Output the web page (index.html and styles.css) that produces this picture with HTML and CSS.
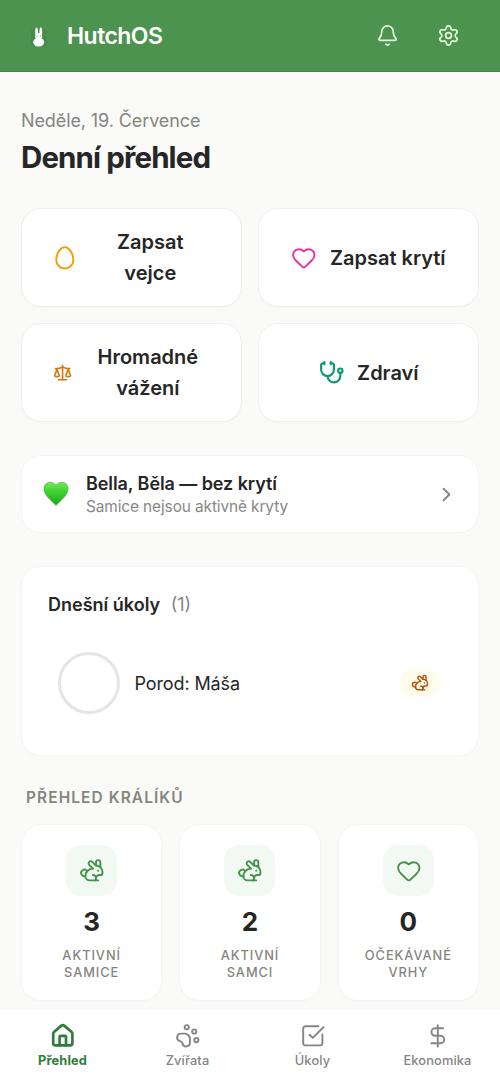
FILE: index.html
```html
<!DOCTYPE html>
<html lang="cs">
<head>
<meta charset="utf-8">
<title>HutchOS</title>
<link rel="stylesheet" href="styles.css">
</head>
<body>
<svg class="defs" aria-hidden="true">
  <symbol id="rabbit" viewBox="0 0 24 24">
    <path d="M13 16a3 3 0 0 1 2.24 5"/><path d="M18 12h.01"/>
    <path d="M18 21h-8a4 4 0 0 1-4-4 7 7 0 0 1 7-7h.2L9.6 6.4a1 1 0 1 1 2.8-2.8L15.8 7h.2c3.3 0 6 2.7 6 6v1a2 2 0 0 1-2 2h-1a3 3 0 0 0-3 3"/>
    <path d="M20 8.54V4a2 2 0 1 0-4 0v3"/><path d="M7.612 12.524a3 3 0 1 0-1.6 4.3"/>
  </symbol>
  <symbol id="heart" viewBox="0 0 24 24">
    <path d="M2 9.5a5.5 5.5 0 0 1 9.591-3.676.56.56 0 0 0 .818 0A5.49 5.49 0 0 1 22 9.5c0 2.29-1.5 4-3 5.5l-5.492 5.313a2 2 0 0 1-3 .019L5 15c-1.5-1.5-3-3.2-3-5.5"/>
  </symbol>
</svg>
<div class="app">
  <header class="topbar">
    <svg class="logo" viewBox="0 0 36 36">
      <rect class="logo-bg" x="11" y="11" width="16" height="17" rx="2"/>
      <ellipse cx="16.600" cy="14" rx="1.400" ry="4.600"/><ellipse cx="20.800" cy="14" rx="1.400" ry="4.600"/>
      <ellipse cx="18.700" cy="18.500" rx="3.500" ry="3.500"/><ellipse cx="18.700" cy="24.300" rx="5.500" ry="4.200"/>
      <circle class="logo-eye" cx="17.200" cy="18" r=".6"/><circle class="logo-eye" cx="20.200" cy="18" r=".6"/>
    </svg>
    <span class="brand">HutchOS</span>
    <div class="actions">
      <svg class="icon i23" viewBox="0 0 24 24"><path d="M10.268 21a2 2 0 0 0 3.464 0"/><path d="M3.262 15.326A1 1 0 0 0 4 17h16a1 1 0 0 0 .74-1.673C19.41 13.956 18 12.499 18 8A6 6 0 0 0 6 8c0 4.499-1.411 5.956-2.738 7.326"/></svg>
      <svg class="icon i23" viewBox="0 0 24 24"><path d="M9.671 4.136a2.34 2.34 0 0 1 4.659 0 2.34 2.34 0 0 0 3.319 1.915 2.34 2.34 0 0 1 2.33 4.033 2.34 2.34 0 0 0 0 3.831 2.34 2.34 0 0 1-2.33 4.033 2.34 2.34 0 0 0-3.319 1.915 2.34 2.34 0 0 1-4.659 0 2.34 2.34 0 0 0-3.32-1.915 2.34 2.34 0 0 1-2.33-4.033 2.34 2.34 0 0 0 0-3.831A2.34 2.34 0 0 1 6.35 6.051a2.34 2.34 0 0 0 3.319-1.915"/><circle cx="12" cy="12" r="3"/></svg>
    </div>
  </header>
  <main class="content">
    <p class="date">Neděle, 19. Července</p>
    <h1 class="title">Denní přehled</h1>
    <div class="quick">
      <button class="card quick-btn egg"><svg class="icon i26" viewBox="0 0 24 24"><path d="M12 2C8 2 4 8 4 14a8 8 0 0 0 16 0c0-6-4-12-8-12"/></svg><span class="quick-label">Zapsat<br>vejce</span></button>
      <button class="card quick-btn mate"><svg class="icon i26"><use href="#heart"/></svg><span class="quick-text">Zapsat krytí</span></button>
      <button class="card quick-btn weigh"><svg class="icon i19" viewBox="0 0 24 24"><path d="m16 16 3-8 3 8c-.87.65-1.92 1-3 1s-2.13-.35-3-1Z"/><path d="m2 16 3-8 3 8c-.87.65-1.92 1-3 1s-2.13-.35-3-1Z"/><path d="M7 21h10M12 3v18"/><path d="M3 7h2c2 0 5-1 7-2 2 1 5 2 7 2h2"/></svg><span class="quick-label">Hromadné<br>vážení</span></button>
      <button class="card quick-btn health"><svg class="icon i26" viewBox="0 0 24 24"><path d="M11 2v2M5 2v2"/><path d="M5 3H4a2 2 0 0 0-2 2v4a6 6 0 0 0 12 0V5a2 2 0 0 0-2-2h-1"/><path d="M8 15a6 6 0 0 0 12 0v-3"/><circle cx="20" cy="10" r="2"/></svg><span class="quick-text">Zdraví</span></button>
    </div>
    <section class="card notice">
      <svg class="green-heart" viewBox="0 0 26 26">
        <defs><linearGradient id="hg" x1="0" y1="0" x2="0" y2="1"><stop offset="0" stop-color="#7be65f"/><stop offset=".35" stop-color="#45d630"/><stop offset="1" stop-color="#16a61c"/></linearGradient></defs>
        <path fill="url(#hg)" stroke="#2fae2b" stroke-width=".6" d="M13 4.500C11.500 2.200 9.300 1.200 7 1.200 3.500 1.200 1 4 1 7.800c0 6.500 6.500 10.700 12 16.700C18.500 18.500 25 14.300 25 7.800c0-3.800-2.500-6.600-6-6.600C16.700 1.200 14.500 2.200 13 4.500Z"/>
      </svg>
      <div class="notice-text"><strong>Bella, Běla — bez krytí</strong><span>Samice nejsou aktivně kryty</span></div>
      <svg class="icon i23 chevron" viewBox="0 0 24 24"><path d="m9 18 6-6-6-6"/></svg>
    </section>
    <section class="card tasks">
      <h2 class="tasks-title">Dnešní úkoly <span>(1)</span></h2>
      <div class="task"><span class="check"></span><span class="task-name">Porod: Máša</span><span class="tag"><svg class="icon"><use href="#rabbit"/></svg></span></div>
    </section>
    <h2 class="section-title">PŘEHLED KRÁLÍKŮ</h2>
    <div class="stats">
      <div class="card stat"><span class="stat-icon"><svg class="icon i26"><use href="#rabbit"/></svg></span><b>3</b><small>AKTIVNÍ<br>SAMICE</small></div>
      <div class="card stat"><span class="stat-icon"><svg class="icon i26"><use href="#rabbit"/></svg></span><b>2</b><small>AKTIVNÍ<br>SAMCI</small></div>
      <div class="card stat"><span class="stat-icon"><svg class="icon i26"><use href="#heart"/></svg></span><b>0</b><small>OČEKÁVANÉ<br>VRHY</small></div>
    </div>
  </main>
  <nav class="tabs">
    <a class="tab active"><svg class="icon i26" viewBox="0 0 24 24"><path d="M15 21v-8a1 1 0 0 0-1-1h-4a1 1 0 0 0-1 1v8"/><path d="M3 10a2 2 0 0 1 .709-1.528l7-6a2 2 0 0 1 2.582 0l7 6A2 2 0 0 1 21 10v9a2 2 0 0 1-2 2H5a2 2 0 0 1-2-2z"/></svg><span>Přehled</span></a>
    <a class="tab"><svg class="icon i26" viewBox="0 0 24 24"><circle cx="11" cy="4" r="2"/><circle cx="18" cy="8" r="2"/><circle cx="20" cy="16" r="2"/><path d="M9 10a5 5 0 0 1 5 5v3.500a3.500 3.500 0 0 1-6.840 1.045Q6.520 17.480 4.460 16.840A3.500 3.500 0 0 1 5.500 10Z"/></svg><span>Zvířata</span></a>
    <a class="tab"><svg class="icon i26" viewBox="0 0 24 24"><path d="M21 10.656V19a2 2 0 0 1-2 2H5a2 2 0 0 1-2-2V5a2 2 0 0 1 2-2h12.344"/><path d="m9 11 3 3L22 4"/></svg><span>Úkoly</span></a>
    <a class="tab"><svg class="icon i26" viewBox="0 0 24 24"><path d="M12 2v20"/><path d="M17 5H9.500a3.500 3.500 0 0 0 0 7h5a3.500 3.500 0 0 1 0 7H6"/></svg><span>Ekonomika</span></a>
  </nav>
</div>
</body>
</html>
```
FILE: styles.css
```css
* { box-sizing: border-box; }
body { margin: 0; background: #fafaf8; color: #262626; font-family: Inter, sans-serif; }
h1, h2, p { margin: 0; }
.defs { display: none; }
.app { height: 1082px; display: flex; flex-direction: column; overflow: hidden; }
.icon { flex: none; fill: none; stroke: currentColor; stroke-width: 1.8; stroke-linecap: round; stroke-linejoin: round; }
.i19 { width: 19.2px; height: 19.2px; }
.i23 { width: 23px; height: 23px; }
.i26 { width: 25.6px; height: 25.6px; }

.topbar { flex: none; height: 72px; display: flex; align-items: center; padding: 0 40px 0 20px; background: #4c934f; border-bottom: 1px solid #438747; color: #fff; }
.logo { width: 36px; height: 36px; fill: #fff; }
.logo-bg, .logo-eye { fill: #468b4b; }
.brand { margin-left: 11px; font-size: 23px; font-weight: 600; letter-spacing: -0.55px; }
.actions { display: flex; gap: 38.5px; margin-left: auto; color: #e2fbdd; }

.content { flex: 1; min-height: 0; padding: 37px 21px 0; }
.date { font-size: 18px; line-height: 24px; color: #85857f; letter-spacing: -0.1px; }
.title { margin-top: 5px; font-size: 29.5px; line-height: 38px; font-weight: 700; letter-spacing: -0.88px; }
.card { background: #fff; border: 1px solid #f5f5f3; border-radius: 20px; box-shadow: 0 1px 2px rgba(0, 0, 0, 0.015); }

.quick { display: grid; grid-template-columns: 1fr 1fr; grid-auto-rows: 99px; gap: 16px; margin-top: 32px; }
.quick-btn { display: flex; align-items: center; justify-content: center; gap: 13px; padding: 0; border-color: #efefed; font: 600 20px/31px Inter, sans-serif; color: #262626; }
.egg, .weigh { justify-content: flex-start; }
.egg { padding: 0 33px 0 30px; gap: 15px; }
.weigh { padding: 0 22px 0 30.5px; gap: 5px; }
.quick-label, .quick-text { padding-top: 1px; }
.quick-label { flex: 1; }
.egg .icon { color: #f59e0b; }
.mate .icon { color: #ec2f9c; }
.weigh .icon { color: #dc7410; stroke-width: 2; }
.health .icon { color: #0a9a6c; stroke-width: 2; }

.notice { display: flex; align-items: center; height: 78px; margin-top: 33px; padding: 0 20.500px; }
.green-heart { width: 26px; height: 26px; }
.notice-text { display: flex; flex-direction: column; flex: 1; margin-left: 17.5px; padding-top: 1.500px; }
.notice-text strong { font-size: 18px; line-height: 24px; font-weight: 600; letter-spacing: -0.08px; }
.notice-text span { font-size: 15.400px; line-height: 22px; letter-spacing: -0.1px; color: #888884; }
.chevron { color: #858585; stroke-width: 2; }

.tasks { height: 190px; margin-top: 33px; padding: 25px 37px 0 26px; }
.tasks-title { font-size: 18px; line-height: 25px; font-weight: 600; }
.tasks-title span { margin-left: 6px; font-weight: 400; color: #85857f; }
.task { display: flex; align-items: center; margin-top: 35px; padding-left: 9.500px; }
.check { width: 62px; height: 62px; border: 3px solid #e5e5e3; border-radius: 50%; }
.task-name { flex: 1; margin-left: 15px; font-size: 18px; letter-spacing: -0.12px; }
.tag { display: flex; align-items: center; justify-content: center; width: 42px; height: 28px; border-radius: 14px; background: #fffcec; color: #b9500f; }
.tag .icon { width: 18px; height: 18px; stroke-width: 2; }

.section-title { margin: 32px 0 0 5px; font-size: 15.400px; line-height: 20px; font-weight: 600; letter-spacing: 1.12px; color: #85857f; }
.stats { display: grid; grid-template-columns: repeat(3, 1fr); gap: 17px; margin-top: 16px; }
.stat { display: flex; flex-direction: column; align-items: center; height: 177px; padding-top: 20px; }
.stat-icon { display: flex; align-items: center; justify-content: center; width: 51px; height: 51px; border-radius: 15px; background: #f2f9f3; color: #43934a; }
.stat b { margin-top: 9px; font-size: 26px; line-height: 34px; font-weight: 700; }
.stat small { margin-top: 8px; font-size: 12.800px; line-height: 17px; font-weight: 500; letter-spacing: 0.95px; text-align: center; color: #85857f; }

.tabs { flex: none; display: grid; grid-template-columns: repeat(4, 1fr); height: 72px; background: #fff; }
.tab { display: flex; flex-direction: column; align-items: center; padding-top: 12.5px; font-size: 12.800px; line-height: 18px; font-weight: 500; letter-spacing: 0.15px; color: #858585; }
.tab span { margin-top: 4px; }
.active { color: #2e7d3b; font-weight: 700; }
.active .icon { stroke-width: 2.5; }
```
